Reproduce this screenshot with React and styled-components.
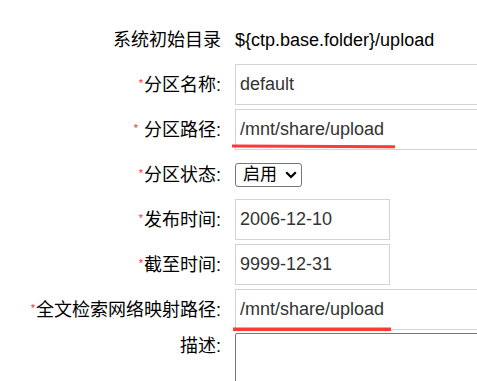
import React from "react";
import styled, { createGlobalStyle } from "styled-components";

const GlobalStyle = createGlobalStyle`
  html, body {
    margin: 0;
    padding: 0;
    background: #fff;
    overflow: hidden;
  }
  body {
    font-family: "Liberation Sans", "Noto Sans CJK SC", sans-serif;
    font-size: 18px;
    color: #000;
  }
`;

const Form = styled.div`
  position: relative;
  display: grid;
  grid-template-columns: 221px 1fr;
  column-gap: 14px;
  row-gap: 4px;
  padding-top: 19px;
  width: 477px;
  height: 381px;
  overflow: hidden;
`;

const Label = styled.div`
  display: flex;
  align-items: ${({ $top }) => ($top ? "flex-start" : "center")};
  justify-content: flex-end;
  min-height: 41px;
  line-height: 24px;
  white-space: nowrap;
`;

const Star = styled.span`
  color: #ff2b2b;
  font-size: 11px;
  line-height: 11px;
  align-self: flex-start;
  margin-top: 14px;
  margin-right: ${({ $gap }) => $gap}px;
`;

const Cell = styled.div`
  position: relative;
  display: flex;
  align-items: ${({ $top }) => ($top ? "flex-start" : "center")};
  min-height: 41px;
`;

const Plain = styled.span`
  line-height: 24px;
  white-space: nowrap;
`;

const Input = styled.input`
  box-sizing: border-box;
  width: ${({ $w }) => $w}px;
  height: 41px;
  margin: 0;
  padding: 0 4px;
  border: 1px solid #d3d3d3;
  border-radius: 0;
  font-family: "Liberation Sans", "Noto Sans CJK SC", sans-serif;
  font-size: 18px;
  color: #333;
  background: #fff;
  outline: none;
`;

const SelectWrap = styled.div`
  position: relative;
  display: inline-flex;
`;

const Select = styled.select`
  appearance: none;
  box-sizing: border-box;
  width: 67px;
  height: 24px;
  margin: 0;
  padding: 0 0 0 7px;
  border: 1px solid #767676;
  border-radius: 3px;
  background: #fff;
  font-family: "Liberation Sans", "Noto Sans CJK SC", sans-serif;
  font-size: 17px;
  line-height: 22px;
  color: #000;
`;

const Chevron = styled.svg`
  position: absolute;
  right: 5px;
  top: 8px;
  pointer-events: none;
`;

const TextArea = styled.textarea`
  box-sizing: border-box;
  width: 320px;
  height: 80px;
  margin: -1px 0 0 0;
  padding: 2px;
  border: 1px solid #767676;
  border-radius: 2px;
  resize: none;
  font-family: "Liberation Sans", "Noto Sans CJK SC", sans-serif;
  font-size: 16px;
`;

const Mark = styled.svg`
  position: absolute;
  left: ${({ $x }) => $x}px;
  top: ${({ $y }) => $y}px;
  pointer-events: none;
`;

function Required({ spaced }) {
  return <Star $gap={spaced ? 6 : 1}>*</Star>;
}

export default function App() {
  return (
    <>
      <GlobalStyle />
      <Form>
        <Label>系统初始目录</Label>
        <Cell>
          <Plain>{"${ctp.base.folder}/upload"}</Plain>
        </Cell>

        <Label>
          <Required />
          分区名称:
        </Label>
        <Cell>
          <Input $w={300} defaultValue="default" readOnly />
        </Cell>

        <Label>
          <Required spaced />
          分区路径:
        </Label>
        <Cell>
          <Input $w={300} defaultValue="/mnt/share/upload" readOnly />
          <Mark $x={-3} $y={34} width="166" height="6" viewBox="0 0 166 6">
            <path d="M0 1.6 L163 2.2 L163 5.2 L0 4.4 Z" fill="#ff3838" />
          </Mark>
        </Cell>

        <Label>
          <Required />
          分区状态:
        </Label>
        <Cell>
          <SelectWrap>
            <Select defaultValue="1">
              <option value="1">启用</option>
              <option value="0">停用</option>
            </Select>
            <Chevron width="12" height="8" viewBox="0 0 12 8">
              <path
                d="M1.2 1.2 L6 6 L10.8 1.2"
                fill="none"
                stroke="#000"
                strokeWidth="2.2"
              />
            </Chevron>
          </SelectWrap>
        </Cell>

        <Label>
          <Required />
          发布时间:
        </Label>
        <Cell>
          <Input $w={155} defaultValue="2006-12-10" readOnly />
        </Cell>

        <Label>
          <Required />
          截至时间:
        </Label>
        <Cell>
          <Input $w={155} defaultValue="9999-12-31" readOnly />
        </Cell>

        <Label>
          <Required />
          全文检索网络映射路径:
        </Label>
        <Cell>
          <Input $w={300} defaultValue="/mnt/share/upload" readOnly />
          <Mark $x={-2} $y={38} width="160" height="5" viewBox="0 0 160 5">
            <rect x="0" y="0.5" width="158" height="3.5" fill="#ff3838" />
          </Mark>
        </Cell>

        <Label $top>描述:</Label>
        <Cell $top>
          <TextArea />
        </Cell>
      </Form>
    </>
  );
}
